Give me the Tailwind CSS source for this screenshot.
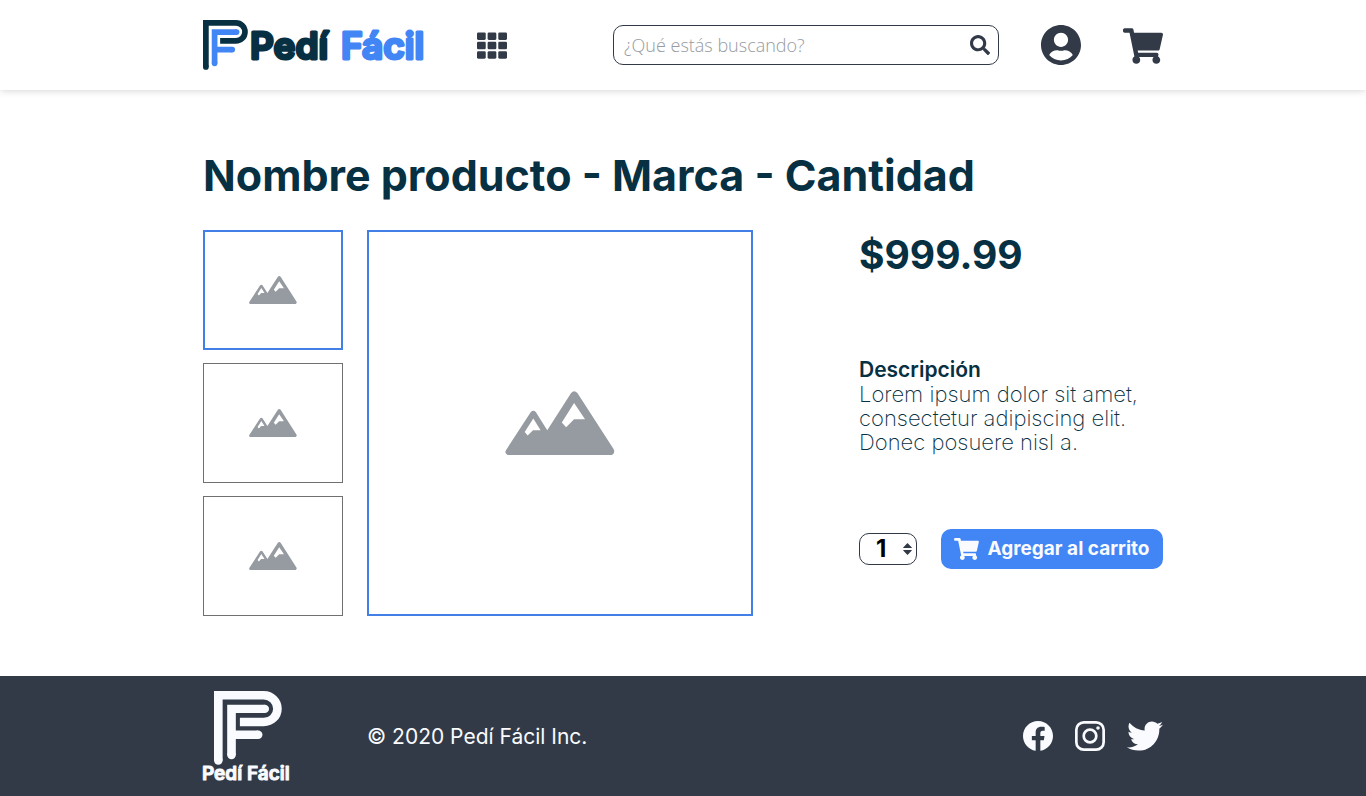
<!DOCTYPE html>
<html lang="es">
<head>
<meta charset="utf-8">
<meta name="viewport" content="width=device-width, initial-scale=1">
<title>Pedí Fácil</title>
<script src="https://cdn.jsdelivr.net/npm/@tailwindcss/browser@4"></script>
</head>
<body class="flex min-h-screen flex-col bg-white font-['Inter',sans-serif] text-[#073042]">
<svg class="hidden" aria-hidden="true">
  <symbol id="cart" viewBox="0 0 576 512"><path fill="currentColor" d="M528.12 301.319l47.273-208C578.806 78.301 567.391 64 551.99 64H159.208l-9.166-44.81C147.758 8.021 137.93 0 126.529 0H24C10.745 0 0 10.745 0 24v16c0 13.255 10.745 24 24 24h69.883l70.248 343.435C147.325 417.1 136 435.222 136 456c0 30.928 25.072 56 56 56s56-25.072 56-56c0-15.674-6.447-29.835-16.824-40h209.647C430.447 426.165 424 440.326 424 456c0 30.928 25.072 56 56 56s56-25.072 56-56c0-22.172-12.888-41.332-31.579-50.405l5.517-24.276c3.413-15.018-8.002-29.319-23.403-29.319H218.117l-6.545-32h293.145c11.206 0 20.92-7.754 23.403-18.681z"/></symbol>
  <symbol id="mountains" viewBox="31 32 329 193"><path fill="currentColor" fill-rule="evenodd" d="M38 225Q27 220 33 210L107 96Q115 87 123 96L157 150L229 38Q238 27 248 38L357 207Q363 219 352 225ZM115 115L89 156L98 166L114 150H137ZM238 68L201 127L214 141L238 117H271Z"/></symbol>
</svg>

<header class="relative bg-white shadow-[0_0_8px_rgba(0,0,0,0.2)]">
  <div class="mx-auto grid h-[90px] max-w-[960px] grid-cols-12 items-center gap-6">
    <a href="#" aria-label="Pedí Fácil" class="col-span-3 block">
      <svg class="h-[50px] w-[224px] overflow-visible" viewBox="0 0 224 50">
        <svg width="45" height="50" viewBox="24 30 134 149" fill="none" stroke-width="17">
          <path stroke="#073042" d="M32.5 170V38.5H122a27 27 0 0 1 0 54H75"/>
          <circle cx="32.500" cy="170" r="8.500" fill="#073042"/>
          <path stroke="#4285f4" d="M50 66H124M58.500 58V159M58 118H111"/>
          <g fill="#4285f4"><circle cx="124" cy="66" r="8.500"/><circle cx="111" cy="118" r="8.500"/><circle cx="58.500" cy="159" r="8.500"/></g>
        </svg>
        <g class="font-['Inter',sans-serif] text-[37px] font-semibold" stroke-width="3" stroke-linejoin="round">
          <text x="47" y="39" fill="#073042" stroke="#073042">Pedí</text>
          <text x="138" y="39" fill="#4285f4" stroke="#4285f4">Fácil</text>
        </g>
      </svg>
    </a>
    <button type="button" aria-label="Categorías" class="col-span-2 ml-7 w-[30px] text-[#323a47]">
      <svg class="h-[27px] w-[30px]" viewBox="0 32 512 448" fill="currentColor"><rect y="32" width="149" height="128" rx="22"/><rect x="181" y="32" width="149" height="128" rx="22"/><rect x="363" y="32" width="149" height="128" rx="22"/><rect y="192" width="149" height="128" rx="22"/><rect x="181" y="192" width="149" height="128" rx="22"/><rect x="363" y="192" width="149" height="128" rx="22"/><rect y="352" width="149" height="128" rx="22"/><rect x="181" y="352" width="149" height="128" rx="22"/><rect x="363" y="352" width="149" height="128" rx="22"/></svg>
    </button>
    <form class="col-span-5 flex h-10 items-center rounded-[10px] border border-[#323a47] pr-2 pl-[10px]">
      <input type="search" aria-label="Buscar" placeholder="¿Qué estás buscando?" class="min-w-0 flex-1 font-['Open_Sans',sans-serif] text-[18px] font-light outline-none placeholder:text-[#969ba1]">
      <button type="submit" aria-label="Buscar" class="text-[#323a47]">
        <svg class="size-5" viewBox="0 0 512 512"><path fill="currentColor" d="M505 442.700L405.300 343c-4.500-4.500-10.600-7-17-7H372c27.600-35.300 44-79.700 44-128C416 93.100 322.900 0 208 0S0 93.100 0 208s93.100 208 208 208c48.300 0 92.700-16.400 128-44v16.300c0 6.400 2.500 12.500 7 17l99.700 99.700c9.400 9.400 24.600 9.400 33.900 0l28.300-28.300c9.400-9.400 9.400-24.600.1-34zM208 336c-70.700 0-128-57.200-128-128 0-70.700 57.200-128 128-128 70.700 0 128 57.200 128 128 0 70.700-57.200 128-128 128z"/></svg>
      </button>
    </form>
    <a href="#" aria-label="Mi cuenta" class="justify-self-end text-[#323a47]">
      <svg class="size-10" viewBox="0 8 496 496"><path fill="currentColor" d="M248 8C111 8 0 119 0 256s111 248 248 248 248-111 248-248S385 8 248 8zm0 96c48.600 0 88 39.400 88 88s-39.400 88-88 88-88-39.400-88-88 39.400-88 88-88zm0 344c-58.700 0-111.300-26.600-146.500-68.200 18.800-35.400 55.600-59.800 98.500-59.800 2.400 0 4.800.4 7.100 1.100 13 4.200 26.600 6.900 40.900 6.900 14.300 0 28-2.700 40.900-6.900 2.300-.7 4.700-1.100 7.100-1.100 42.900 0 79.700 24.400 98.500 59.800C359.300 421.400 306.700 448 248 448z"/></svg>
    </a>
    <a href="#" aria-label="Carrito" class="justify-self-end pt-px text-[#323a47]"><svg class="h-9 w-10"><use href="#cart"/></svg></a>
  </div>
</header>

<main class="mx-auto w-full max-w-[960px] flex-1 pt-[60px] pb-[60px]">
  <h1 class="text-[43px] leading-[50px] font-bold">Nombre producto - Marca - Cantidad</h1>
  <div class="mt-[30px] grid grid-cols-12 gap-6">
    <div class="col-span-2 flex flex-col justify-between text-[#969ba1]">
      <button type="button" aria-label="Imagen 1" class="flex h-[120px] items-center justify-center border-2 border-[#4280e8]"><svg class="h-7 w-12"><use href="#mountains"/></svg></button>
      <button type="button" aria-label="Imagen 2" class="flex h-[120px] items-center justify-center border border-[#707070]"><svg class="h-7 w-12"><use href="#mountains"/></svg></button>
      <button type="button" aria-label="Imagen 3" class="flex h-[120px] items-center justify-center border border-[#707070]"><svg class="h-7 w-12"><use href="#mountains"/></svg></button>
    </div>
    <div class="col-span-5 flex aspect-square items-center justify-center border-2 border-[#4280e8] text-[#969ba1]"><svg class="h-16 w-[110px]"><use href="#mountains"/></svg></div>
    <section class="col-span-4 col-start-9 flex flex-col">
      <p class="text-[39px] leading-[50px] font-bold">$999.99</p>
      <h2 class="mt-[78px] text-[21px] leading-6 font-semibold">Descripción</h2>
      <p class="text-[22px] leading-6 font-extralight">Lorem ipsum dolor sit amet, consectetur adipiscing elit. Donec posuere nisl a.</p>
      <form class="mt-[75px] grid grid-cols-[58px_1fr] items-center gap-6">
        <div class="relative">
          <select aria-label="Cantidad" class="h-8 w-full appearance-none rounded-[10px] border border-[#323a47] pl-4 text-[24px] leading-[30px] font-bold text-black">
            <option>1</option><option>2</option><option>3</option><option>4</option><option>5</option>
          </select>
          <svg class="pointer-events-none absolute top-[10px] right-[5px] h-3 w-[9px]" viewBox="0 0 9 12" fill="#323a47"><path d="M4.500 0L8.800 4.400Q9 5 8.400 5H.6Q0 5 .2 4.400ZM4.500 12L8.800 7.600Q9 7 8.400 7H.6Q0 7 .2 7.600Z"/></svg>
        </div>
        <button type="submit" class="flex h-10 items-center justify-center gap-2 rounded-[10px] bg-[#4285f4] text-[19px] font-bold whitespace-nowrap text-[#f9fbff]"><svg class="h-[22px] w-[25px]"><use href="#cart"/></svg>Agregar al carrito</button>
      </form>
    </section>
  </div>
</main>

<footer class="bg-[#323a47] text-[#f9fbff]">
  <div class="mx-auto grid h-[120px] max-w-[960px] grid-cols-12 items-center gap-6">
    <a href="#" aria-label="Pedí Fácil" class="col-span-2">
      <svg class="h-[92px] w-[96px] overflow-visible" viewBox="0 0 96 92">
        <svg x="11" y="1" width="68" height="74" preserveAspectRatio="none" viewBox="24 30 134 149" fill="none" stroke="#f9fbff" stroke-width="17">
          <path d="M32.500 170V38.500H122a27 27 0 0 1 0 54H75"/>
          <path d="M50 66H124M58.500 58V159M58 118H111"/>
          <g fill="#f9fbff" stroke="none"><circle cx="32.500" cy="170" r="8.500"/><circle cx="124" cy="66" r="8.500"/><circle cx="111" cy="118" r="8.500"/><circle cx="58.500" cy="159" r="8.500"/></g>
        </svg>
        <text x="-1" y="90" class="font-['Inter',sans-serif] text-[19px] font-semibold" fill="#f9fbff" stroke="#f9fbff" stroke-linejoin="round">Pedí Fácil</text>
      </svg>
    </a>
    <p class="col-span-5 pt-0.5 text-[21px]">© 2020 Pedí Fácil Inc.</p>
    <nav aria-label="Redes sociales" class="col-span-5 flex items-center justify-end gap-[22px]">
      <a href="#" aria-label="Facebook"><svg class="size-[30px]" viewBox="8 8 496 496"><path fill="currentColor" d="M504 256C504 119 393 8 256 8S8 119 8 256c0 123.780 90.690 226.380 209.250 245V327.690h-63V256h63v-54.640c0-62.150 37-96.480 93.670-96.480 27.140 0 55.520 4.840 55.520 4.840v61h-31.280c-30.800 0-40.410 19.120-40.410 38.730V256h68.780l-11 71.690h-57.780V501C413.310 482.380 504 379.780 504 256z"/></svg></a>
      <a href="#" aria-label="Instagram"><svg class="size-[30px]" viewBox="0 0 30 30" fill="none" stroke="currentColor" stroke-width="2.700"><rect x="1.350" y="1.350" width="27.300" height="27.300" rx="7.500"/><circle cx="15" cy="15" r="6.300"/><circle cx="23" cy="7" r="1.800" fill="currentColor" stroke="none"/></svg></a>
      <a href="#" aria-label="Twitter"><svg class="h-[30px] w-9" viewBox="0 48 512 416"><path fill="currentColor" d="M459.370 151.716c.325 4.548.325 9.097.325 13.645 0 138.720-105.583 298.558-298.558 298.558-59.452 0-114.680-17.219-161.137-47.106 8.447.974 16.568 1.299 25.340 1.299 49.055 0 94.213-16.568 130.274-44.832-46.132-.975-84.792-31.188-98.112-72.772 6.498.974 12.995 1.624 19.818 1.624 9.421 0 18.843-1.300 27.614-3.573-48.081-9.747-84.143-51.980-84.143-102.985v-1.299c13.969 7.797 30.214 12.670 47.431 13.319-28.264-18.843-46.781-51.005-46.781-87.391 0-19.492 5.197-37.360 14.294-52.954 51.655 63.675 129.300 105.258 216.365 109.807-1.624-7.797-2.599-15.918-2.599-24.040 0-57.828 46.782-104.934 104.934-104.934 30.213 0 57.502 12.670 76.670 33.137 23.715-4.548 46.456-13.320 66.599-25.340-7.798 24.366-24.366 44.833-46.132 57.827 21.117-2.273 41.584-8.122 60.426-16.243-14.292 20.791-32.161 39.308-52.628 54.253z"/></svg></a>
    </nav>
  </div>
</footer>
</body>
</html>
